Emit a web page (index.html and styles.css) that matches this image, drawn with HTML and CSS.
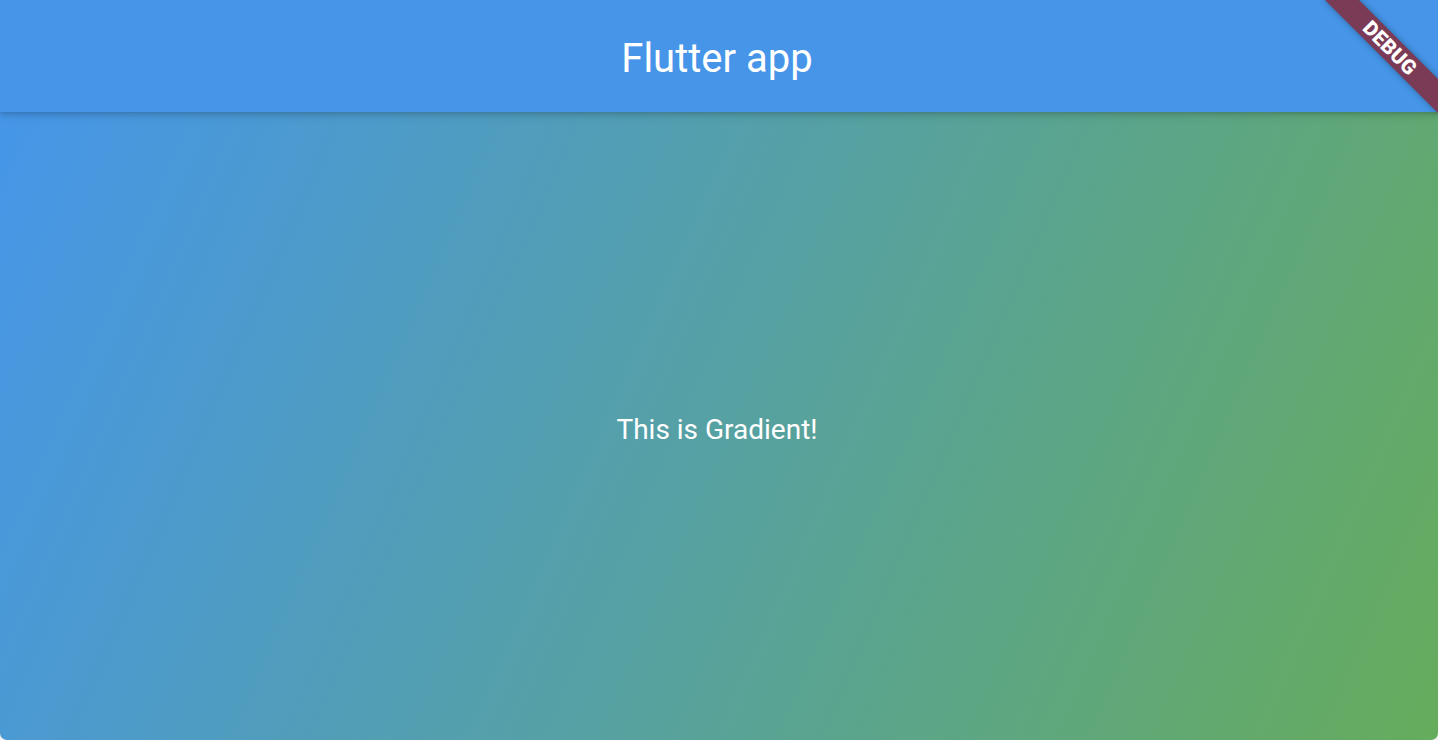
FILE: index.html
```html
<!DOCTYPE html>
<html lang="en">
<head>
<meta charset="utf-8">
<title>Flutter app</title>
<link rel="stylesheet" href="styles.css">
</head>
<body>
<div class="app">
  <header class="app-bar">
    <h1 class="app-title">Flutter app</h1>
  </header>
  <main class="gradient-body">
    <p class="gradient-text">This is Gradient!</p>
  </main>
  <div class="debug-banner"><span>DEBUG</span></div>
</div>
</body>
</html>
```
FILE: styles.css
```css
html, body {
  margin: 0;
  padding: 0;
  background: #f1f1f1;
}
body {
  width: 1438px;
  height: 740px;
  overflow: hidden;
  font-family: Roboto, "Liberation Sans", sans-serif;
}
.app {
  position: relative;
  width: 1438px;
  height: 740px;
  display: flex;
  flex-direction: column;
  overflow: hidden;
  border-radius: 0 0 7px 7px;
}
.app-bar {
  position: relative;
  z-index: 2;
  box-sizing: border-box;
  height: 112px;
  flex: 0 0 112px;
  padding: 5px 4px 0 0;
  background: #4695e9;
  display: flex;
  align-items: center;
  justify-content: center;
  box-shadow: 0 2px 4px rgba(0,0,0,0.14), 0 4px 10px rgba(0,0,0,0.10);
}
.app-title {
  margin: 0;
  color: #ffffff;
  font-size: 40px;
  font-weight: 400;
  line-height: 1;
}
.gradient-body {
  flex: 1;
  box-sizing: border-box;
  padding: 7px 4px 0 0;
  display: flex;
  align-items: center;
  justify-content: center;
  background: linear-gradient(113.6deg, #4696e9 0%, #66ac5c 100%);
}
.gradient-text {
  margin: 0;
  color: #ffffff;
  font-size: 28px;
  line-height: 1;
}
.debug-banner {
  position: absolute;
  z-index: 3;
  top: 36px;
  right: -32px;
  width: 160px;
  height: 24px;
  transform: rotate(45deg);
  background: #7b3a55;
  box-shadow: 0 0 6px rgba(0,0,0,0.35);
  display: flex;
  align-items: center;
  justify-content: center;
}
.debug-banner span {
  color: #ffffff;
  font-size: 20.4px;
  font-weight: 900;
  line-height: 1;
  letter-spacing: 0.3px;
}
```
